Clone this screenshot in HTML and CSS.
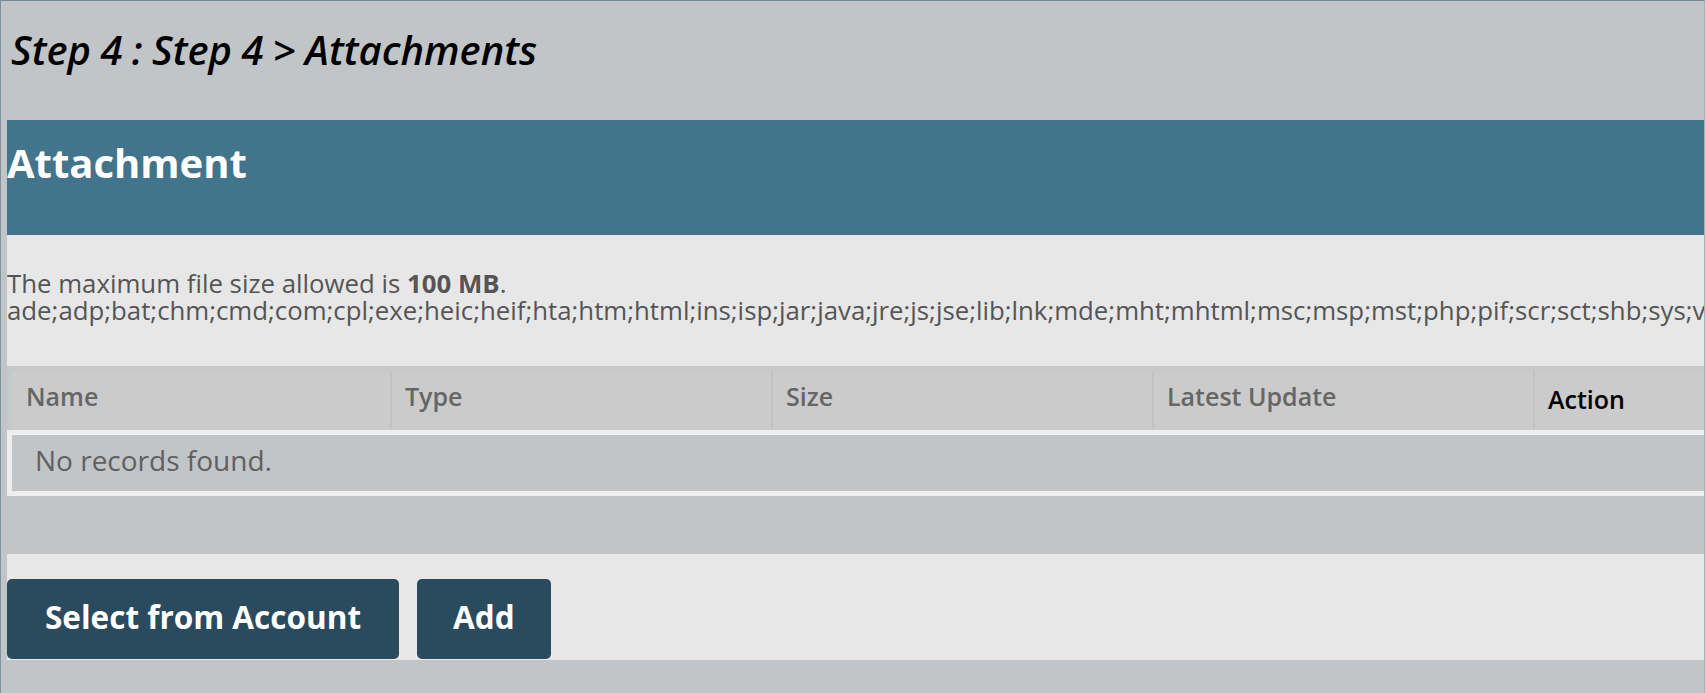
FILE: index.html
```html
<!DOCTYPE html>
<html lang="en">
<head>
<meta charset="utf-8">
<title>Step 4 - Attachments</title>
<link rel="stylesheet" href="styles.css">
</head>
<body>
<div class="frame">
  <h1 class="page-title">Step 4 : Step 4 &gt; Attachments</h1>
  <div class="content">
    <h2 class="panel-head">Attachment</h2>
    <div class="info">
      <div class="info-line">The maximum file size allowed is <b>100 MB</b>.</div>
      <div class="info-line">ade;adp;bat;chm;cmd;com;cpl;exe;heic;heif;hta;htm;html;ins;isp;jar;java;jre;js;jse;lib;lnk;mde;mht;mhtml;msc;msp;mst;php;pif;scr;sct;shb;sys;vb;vbe;vbs;vxd;wsc;wsf;wsh</div>
    </div>
    <div class="table">
      <div class="thead">
        <div class="th th-first">Name</div>
        <div class="th">Type</div>
        <div class="th">Size</div>
        <div class="th">Latest Update</div>
        <div class="th th-action">Action</div>
      </div>
      <div class="tbody">
        <div class="empty">No records found.</div>
      </div>
    </div>
    <div class="actions">
      <button class="btn" type="button">Select from Account</button>
      <button class="btn" type="button">Add</button>
    </div>
  </div>
</div>
</body>
</html>
```
FILE: styles.css
```css
html, body {
  margin: 0;
  padding: 0;
  background: #c1c5c7;
  overflow: hidden;
}

body {
  font-family: "Open Sans", "Noto Sans", "Liberation Sans", sans-serif;
}

.frame {
  box-sizing: border-box;
  width: 1705px;
  height: 693px;
  border-top: 1px solid #768a94;
  border-left: 1px solid #7f939c;
  border-right: 1px solid #a7b1b5;
  overflow: hidden;
}

.page-title {
  margin: 0;
  padding: 23px 0 44px 10px;
  font-size: 40px;
  line-height: 52px;
  font-style: italic;
  font-weight: 600;
  word-spacing: -1px;
  color: #000;
}

.content {
  margin-left: 6px;
  overflow: hidden;
}

.panel-head {
  margin: 0;
  padding: 16px 0 45px 0;
  height: 54px;
  line-height: 54px;
  font-size: 40px;
  font-weight: 700;
  color: #fff;
  background: #42758c;
}

.info {
  background: #e7e7e7;
  padding: 35px 0 42px 0;
  font-size: 25.8px;
  line-height: 27px;
  color: #555;
  white-space: nowrap;
}

.info b {
  font-weight: 700;
}

.table {
  width: 2000px;
}

.thead {
  display: grid;
  grid-template-columns: 378px repeat(4, 381px);
  border-top: 5px solid #c6c9cb;
  border-left: 5px solid #c6c9cb;
  background: #cbcbcb;
}

.th {
  height: 59px;
  box-sizing: border-box;
  padding: 8px 0 0 13px;
  line-height: 34px;
  font-size: 25px;
  font-weight: 600;
  color: #666;
  border-left: 2px solid #c3c3c3;
}

.th-first {
  border-left: none;
  padding-left: 14px;
}

.th-action {
  color: #000;
  padding-top: 11px;
}

.tbody {
  border: 5px solid #eeeeee;
  border-right: none;
  background: #c1c5c7;
}

.empty {
  height: 56px;
  box-sizing: border-box;
  padding: 6px 0 0 23px;
  line-height: 38px;
  font-size: 28px;
  color: #606060;
}

.actions {
  margin-top: 58px;
  background: #e7e7e7;
  padding: 25px 0 1px 0;
  display: flex;
  gap: 18px;
}

.btn {
  font-family: "Open Sans", "Noto Sans", "Liberation Sans", sans-serif;
  height: 80px;
  box-sizing: border-box;
  padding: 17px 38px 21px 38px;
  line-height: 42px;
  font-size: 31.5px;
  font-weight: 700;
  color: #fff;
  background: #2a4a5e;
  border: none;
  border-radius: 5px;
}

.btn + .btn {
  padding: 17px 36px 21px 36px;
}
```
